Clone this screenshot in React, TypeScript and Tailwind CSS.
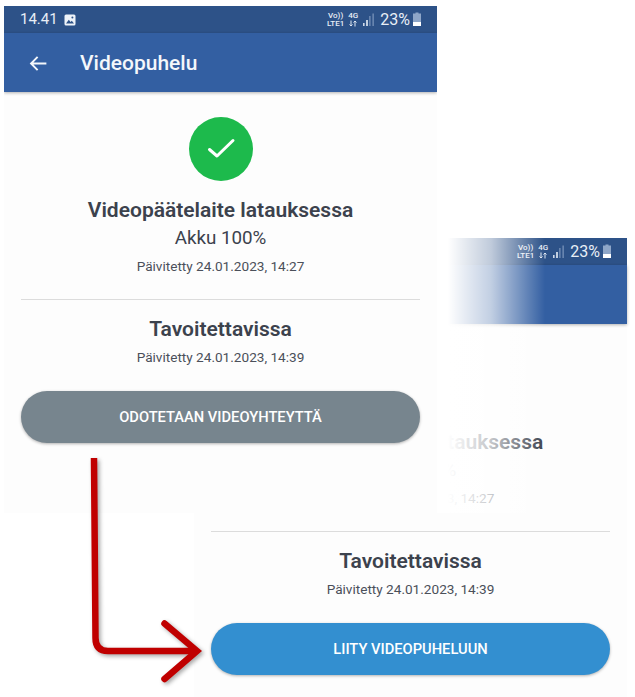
const font = { fontFamily: "Roboto, 'Liberation Sans', sans-serif" };

function StatusRight() {
  return (
    <div className="flex items-center text-[#e8eef6]">
      <div className="flex flex-col items-center text-[8px] leading-[8px] font-medium">
        <span>Vo))</span>
        <span>LTE1</span>
      </div>
      <div className="ml-[4px] flex flex-col items-center text-[8px] leading-[8px] font-medium">
        <span>4G</span>
        <svg width="10" height="7" viewBox="0 0 10 7" fill="none" stroke="#dfe7f2" strokeWidth="1">
          <path d="M3 0.5V6M1.5 4.5L3 6L4.5 4.5M7 6.5V1M5.5 2.5L7 1L8.5 2.5" />
        </svg>
      </div>
      <svg className="ml-[5px]" width="12" height="14" viewBox="0 0 12 14" fill="#cdd8e8">
        <rect x="0" y="10" width="1.6" height="3" />
        <rect x="3.2" y="7" width="1.6" height="6" fill="#e8eef6" />
        <rect x="6.4" y="3" width="1" height="10" fill="#8ea6c8" />
        <rect x="9.6" y="0.5" width="1" height="12.5" fill="#8ea6c8" />
      </svg>
      <span className="ml-[5px] text-[16px] leading-none">23%</span>
      <svg className="ml-[2px]" width="10" height="15" viewBox="0 0 10 15">
        <path d="M3.5 0.5H6.5V1.5H9V14H1V1.5H3.5Z" fill="#8ea6c8" />
        <path d="M1 10H9V14H1Z" fill="#ffffff" />
      </svg>
    </div>
  );
}

function Panel({ children, button, className }: { children: React.ReactNode; button: string; className: string }) {
  return (
    <div className={`absolute w-[433px] bg-[#fdfdfd] ${className}`}>
      <div className="flex h-[27px] items-center justify-between bg-[#2d5288] pl-[16px] pr-[15px]">
        <div className="flex items-center text-[#e8eef6]">
          <span className="text-[15px] leading-none">14.41</span>
          <svg className="ml-[6px]" width="12" height="12" viewBox="0 0 12 12">
            <rect x="0.5" y="0.5" width="11" height="11" rx="1.5" fill="#eef3f9" />
            <path d="M2 9.5L4.8 5.8L6.6 8L7.8 6.8L10 9.5Z" fill="#2d5288" />
            <circle cx="8.4" cy="3.6" r="1" fill="#2d5288" />
          </svg>
        </div>
        <StatusRight />
      </div>
      <div className="flex h-[59px] items-center bg-[#335fa2] pl-[24px] pt-[1px] shadow-[0_1px_3px_rgba(0,0,0,0.3)]">
        <svg width="21" height="21" viewBox="0 0 24 24" fill="none" stroke="#f4f7fb" strokeWidth="2.2">
          <path d="M21 12H3.5M11 4.5L3.5 12L11 19.5" />
        </svg>
        <span className="ml-[31px] text-[21px] font-medium leading-none text-[#f4f7fb]">Videopuhelu</span>
      </div>
      <div className="flex flex-col items-center px-[17px] pt-[25px]">
        {children}
        <div className="mt-[24px] h-px w-full bg-[#dcdcdc]" />
        <h2 className="mt-[16px] text-[21px] font-semibold leading-[26px] text-[#3c424d]">Tavoitettavissa</h2>
        <p className="mt-[6px] text-[13.6px] leading-[18px] text-[#4b505a]">Päivitetty 24.01.2023, 14:39</p>
        <div
          className={`mt-[25px] flex h-[52px] w-full items-center justify-center rounded-[26px] text-[14.7px] font-medium text-white shadow-[0_1px_3px_rgba(0,0,0,0.3)] ${
            button === "LIITY VIDEOPUHELUUN" ? "bg-[#338fd0]" : "bg-[#77858e]"
          }`}
        >
          {button}
        </div>
        <div className="h-[70px]" />
      </div>
    </div>
  );
}

function Status() {
  return (
    <>
      <div className="flex h-[64px] w-[64px] items-center justify-center rounded-full bg-[#1dba4c]">
        <svg width="30" height="24" viewBox="0 0 30 24" fill="none" stroke="#ffffff" strokeWidth="3" strokeLinecap="round" strokeLinejoin="round">
          <path d="M3.5 12.5L11 19L27 3.5" />
        </svg>
      </div>
      <h1 className="mt-[16px] text-[21px] font-semibold leading-[26px] text-[#3c424d]">Videopäätelaite latauksessa</h1>
      <p className="mt-[3px] text-[18.8px] leading-[24px] text-[#3c424d]">Akku 100%</p>
      <p className="mt-[7px] text-[13.6px] leading-[18px] text-[#4b505a]">Päivitetty 24.01.2023, 14:27</p>
    </>
  );
}

export default function App() {
  return (
    <div className="relative h-[697px] w-[635px] overflow-hidden bg-white" style={font}>
      <Panel className="left-[194px] top-[238px]" button="LIITY VIDEOPUHELUUN">
        <Status />
      </Panel>
      <div className="absolute left-[437px] top-[238px] h-[275px] w-[108px] bg-gradient-to-r from-white from-[10%] via-white/70 via-[50%] to-transparent" />
      <Panel className="left-[4px] top-[6px] h-[507px] overflow-hidden" button="ODOTETAAN VIDEOYHTEYTTÄ">
        <Status />
      </Panel>
      <svg className="absolute left-0 top-0 drop-shadow-[2px_2px_2px_rgba(0,0,0,0.35)]" width="635" height="697" fill="none" stroke="#c00000" strokeWidth="6.5">
        <path d="M94 458L95.5 638Q95.5 651 108 651H195" />
        <path d="M164.5 623.5L197 651L164.5 679" strokeLinecap="round" strokeLinejoin="miter" />
      </svg>
    </div>
  );
}
